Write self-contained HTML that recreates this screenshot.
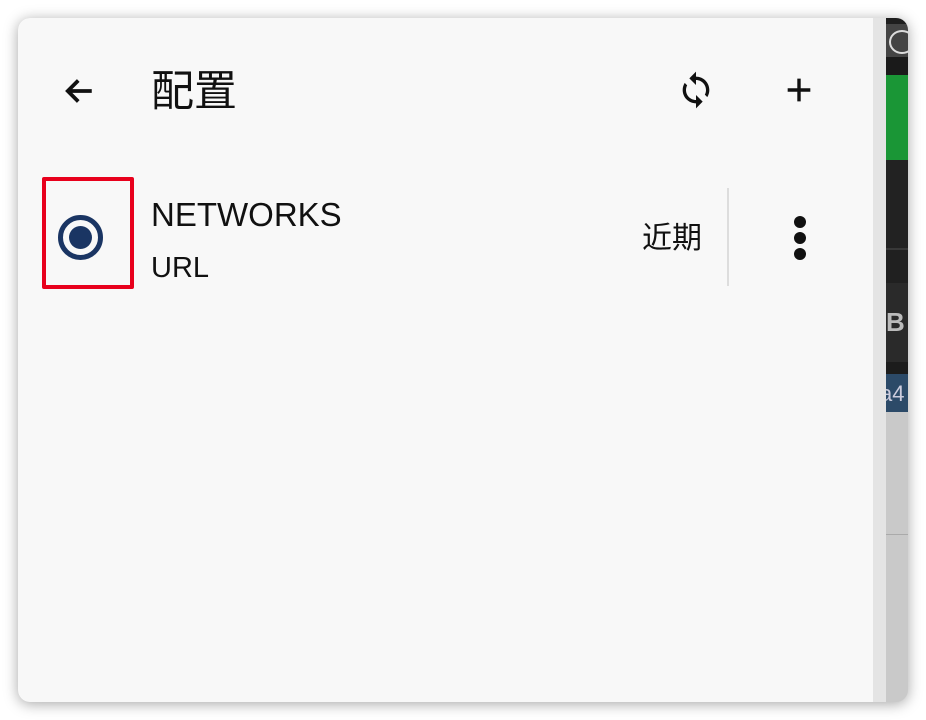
<!DOCTYPE html>
<html><head><meta charset="utf-8"><style>
body{margin:0;width:926px;height:720px;background:#fff;position:relative;overflow:hidden;font-family:"Liberation Sans","Noto Sans CJK SC",sans-serif;}
.win{position:absolute;left:18px;top:18px;width:890px;height:684px;border-radius:12px;overflow:hidden;box-shadow:0 2px 14px rgba(0,0,0,.35);background:#c9c9c9;}
.panel{position:absolute;left:0;top:0;width:855px;height:684px;background:#f8f8f8;}
.strip{position:absolute;left:855px;top:0;width:13px;height:684px;background:#e4e4e4;}
.r{position:absolute;left:868px;width:22px;}
.abs{position:absolute;}
</style></head><body>
<div class="win">
 <div class="r" style="top:0;height:6px;background:#1e1e1e"></div>
 <div class="r" style="top:6px;height:33px;background:#444"><div class="abs" style="left:3px;top:6px;width:22px;height:20px;border:2px solid #ddd;border-radius:50%"></div></div>
 <div class="r" style="top:39px;height:18px;background:#1a1a1a"></div>
 <div class="r" style="top:57px;height:85px;background:#1a9636"></div>
 <div class="r" style="top:142px;height:88px;background:#222"></div>
 <div class="r" style="top:230px;height:2px;background:#383838"></div>
 <div class="r" style="top:232px;height:33px;background:#202020"></div>
 <div class="r" style="top:265px;height:79px;background:#2a2a2a;color:#bbb;font-weight:bold;font-size:26px;line-height:79px;">B</div>
 <div class="r" style="top:344px;height:12px;background:#1c1c1c"></div>
 <div class="r" style="top:356px;height:38px;background:#2c4a68;color:#ccd;font-size:22px;line-height:40px;text-indent:-6px;">a4</div>
 <div class="r" style="top:516px;height:1px;background:#aaa"></div>
 <div class="panel">
  <svg class="abs" style="left:43px;top:55px" width="36" height="36" viewBox="0 0 24 24"><path d="M20.5 12H5M11.5 5l-7 7 7 7" fill="none" stroke="#111" stroke-width="2.5"/></svg>
  <div class="abs" style="left:133px;top:49px;font-size:43px;color:#111;line-height:50px">配置</div>
  <svg class="abs" style="left:658px;top:52px" width="40" height="40" viewBox="0 0 24 24"><path d="M12 4V1L8 5l4 4V6c3.3 0 6 2.700 6 6 0 1-.25 2-.7 2.8l1.46 1.46C19.54 15 20 13.6 20 12c0-4.4-3.6-8-8-8zm0 14c-3.3 0-6-2.7-6-6 0-1 .25-2 .7-2.8L5.24 7.74C4.46 9 4 10.4 4 12c0 4.4 3.6 8 8 8v3l4-4-4-4v3z" fill="#111"/></svg>
  <svg class="abs" style="left:764px;top:55px" width="34" height="34" viewBox="0 0 24 24"><path d="M12 4v16M4 12h16" stroke="#111" stroke-width="2.4"/></svg>
  <div class="abs" style="left:24px;top:159px;width:84px;height:104px;border:4px solid #e8001c;border-radius:2px"></div>
  <div class="abs" style="left:40px;top:197px;width:45px;height:45px;border:5px solid #1a3563;border-radius:50%;box-sizing:border-box"></div>
  <div class="abs" style="left:51px;top:208px;width:23px;height:23px;background:#1a3563;border-radius:50%"></div>
  <div class="abs" style="left:133px;top:176px;font-size:33px;color:#111;line-height:42px">NETWORKS</div>
  <div class="abs" style="left:133px;top:233px;font-size:29px;color:#111;line-height:34px">URL</div>
  <div class="abs" style="left:624px;top:202px;font-size:30px;color:#111;line-height:38px">近期</div>
  <div class="abs" style="left:709px;top:170px;width:2px;height:98px;background:#ddd"></div>
  <div class="abs" style="left:776px;top:198px;width:12px;height:12px;background:#111;border-radius:50%"></div>
  <div class="abs" style="left:776px;top:214px;width:12px;height:12px;background:#111;border-radius:50%"></div>
  <div class="abs" style="left:776px;top:230px;width:12px;height:12px;background:#111;border-radius:50%"></div>
 </div>
 <div class="strip"></div>
</div>
</body></html>
